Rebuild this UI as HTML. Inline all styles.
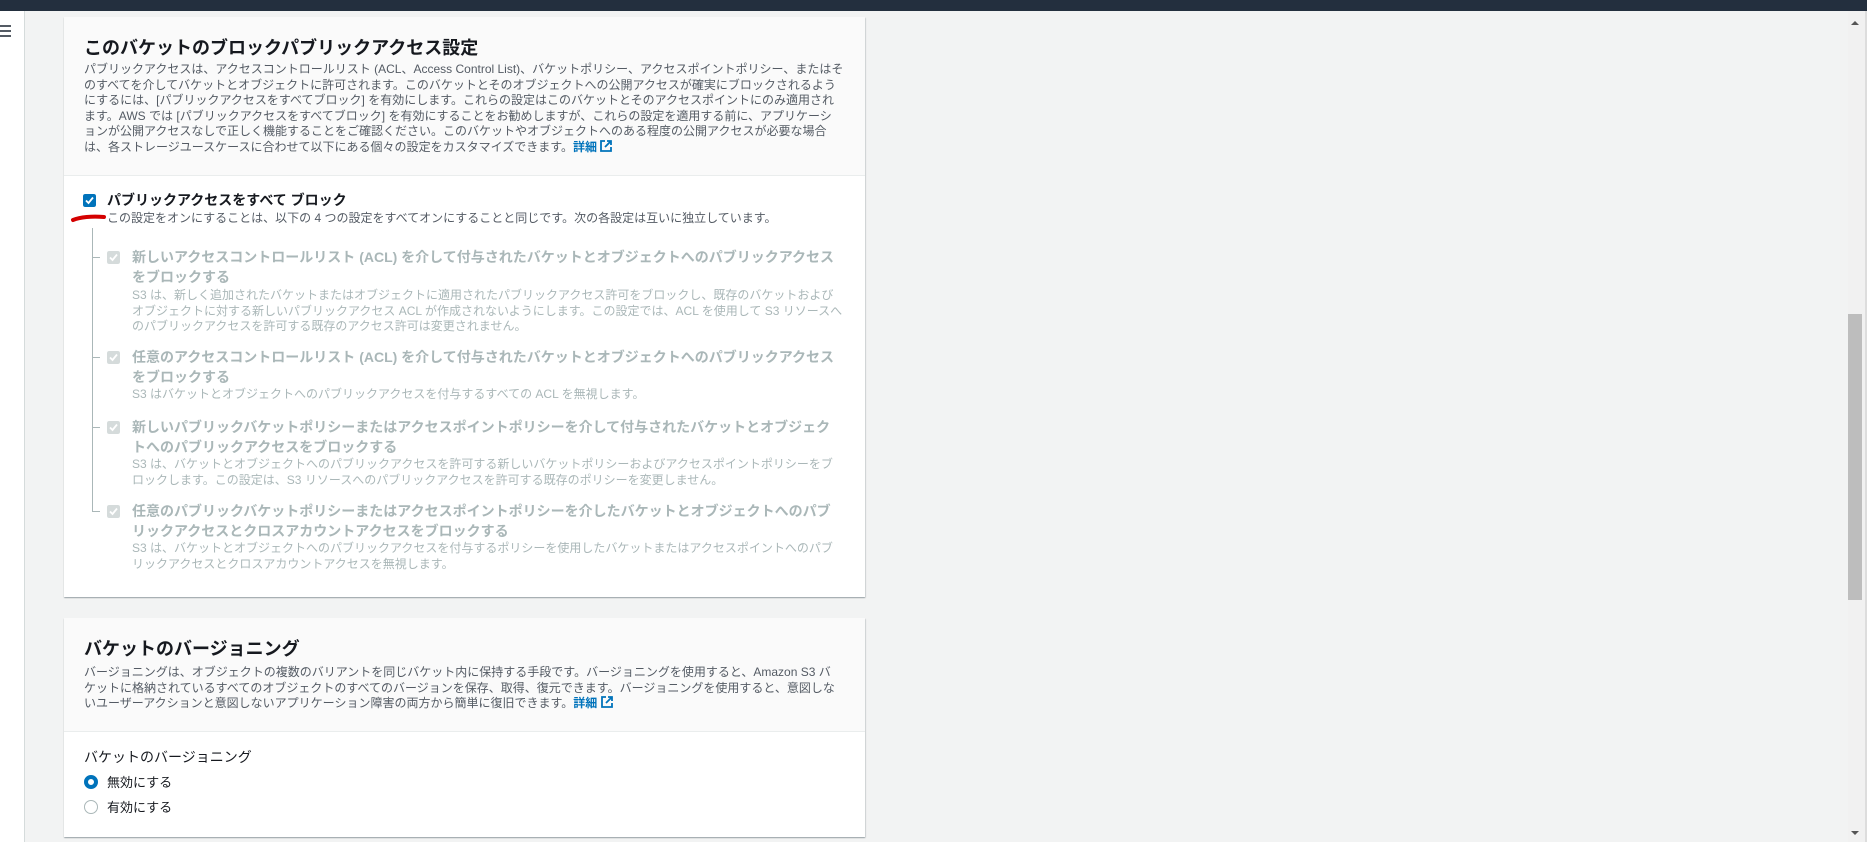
<!DOCTYPE html>
<html><head><meta charset="utf-8"><style>
*{margin:0;padding:0;box-sizing:border-box}
body{width:1867px;height:842px;overflow:hidden;background:#f2f3f3;font-family:"Liberation Sans","Noto Sans CJK JP",sans-serif;position:relative;color:#16191f}
.top{position:absolute;left:0;top:0;width:1867px;height:11px;background:#232f3e}
.side{position:absolute;left:0;top:11px;width:25px;height:831px;background:#fff;border-right:1px solid #d5dbdb}
.ham{position:absolute;left:0;top:25px;width:11px}
.ham i{display:block;height:2px;background:#545b64;margin-bottom:3px}
.card{position:absolute;left:64px;width:801px;background:#fff;box-shadow:0 1px 1px rgba(0,28,36,.3),1px 1px 1px rgba(0,28,36,.1);}
.hd{background:#fafafa;border-bottom:1px solid #eaeded;position:relative}
.t{position:absolute;font-size:18px;font-weight:bold;white-space:nowrap;color:#16191f}
.p{position:absolute;font-size:12px;line-height:15.5px;color:#545b64;white-space:nowrap}
.a{color:#0073bb;font-weight:bold}
.st{position:absolute;font-size:14px;font-weight:bold;line-height:20px;white-space:nowrap}
.dis{color:#aab7b8}
.cb{position:absolute;width:13px;height:13px;border-radius:2px}
.sb{position:absolute;left:1848px;top:11px;width:19px;height:831px;background:#f1f1f1;border-right:2px solid #ddd}
</style></head><body>
<div class="top"></div>
<div class="side"><div class="ham" style="top:14px"><i></i><i></i><i></i></div></div>

<div class="card" style="top:17px;height:580px">
 <div class="hd" style="height:159px">
  <div class="t" style="left:20px;top:17px">このバケットのブロックパブリックアクセス設定</div>
  <div class="p" style="left:20px;top:45px">パブリックアクセスは、アクセスコントロールリスト (ACL、Access Control List)、バケットポリシー、アクセスポイントポリシー、またはそ<br>のすべてを介してバケットとオブジェクトに許可されます。このバケットとそのオブジェクトへの公開アクセスが確実にブロックされるよう<br>にするには、[パブリックアクセスをすべてブロック] を有効にします。これらの設定はこのバケットとそのアクセスポイントにのみ適用され<br>ます。AWS では [パブリックアクセスをすべてブロック] を有効にすることをお勧めしますが、これらの設定を適用する前に、アプリケーシ<br>ョンが公開アクセスなしで正しく機能することをご確認ください。このバケットやオブジェクトへのある程度の公開アクセスが必要な場合<br>は、各ストレージユースケースに合わせて以下にある個々の設定をカスタマイズできます。<span class="a">詳細 <svg width="12" height="12" viewBox="0 0 12 12" style="vertical-align:-1px"><path d="M5 1H1v10h10V7M7 1h4v4M11 1L5 7" fill="none" stroke="#0073bb" stroke-width="1.8"/></svg></span></div>
 </div>
 <svg class="cb" style="left:19px;top:177px" viewBox="0 0 13 13"><rect width="13" height="13" rx="2" fill="#0073bb"/><path d="M3 6.5l2.5 2.5L10 3.5" stroke="#fff" stroke-width="1.8" fill="none"/></svg>
 <div class="st" style="left:43px;top:173px;font-weight:bold">パブリックアクセスをすべて ブロック</div>
 <div class="p" style="left:43px;top:194px">この設定をオンにすることは、以下の 4 つの設定をすべてオンにすることと同じです。次の各設定は互いに独立しています。</div>
 <div style="position:absolute;left:28px;top:211px;width:1px;height:283px;background:#aab7b8"></div>
 <div style="position:absolute;left:28px;top:240px;width:8px;height:1px;background:#aab7b8"></div>
 <div style="position:absolute;left:28px;top:340px;width:8px;height:1px;background:#aab7b8"></div>
 <div style="position:absolute;left:28px;top:410px;width:8px;height:1px;background:#aab7b8"></div>
 <div style="position:absolute;left:28px;top:494px;width:8px;height:1px;background:#aab7b8"></div>

 <svg class="cb" style="left:43px;top:234px" viewBox="0 0 13 13"><rect width="13" height="13" rx="2" fill="#d5dbdb"/><path d="M3 6.5l2.5 2.5L10 3.5" stroke="#fff" stroke-width="1.8" fill="none"/></svg>
 <div class="st dis" style="left:68px;top:230px">新しいアクセスコントロールリスト (ACL) を介して付与されたバケットとオブジェクトへのパブリックアクセス<br>をブロックする</div>
 <div class="p dis" style="left:68px;top:271px">S3 は、新しく追加されたバケットまたはオブジェクトに適用されたパブリックアクセス許可をブロックし、既存のバケットおよび<br>オブジェクトに対する新しいパブリックアクセス ACL が作成されないようにします。この設定では、ACL を使用して S3 リソースへ<br>のパブリックアクセスを許可する既存のアクセス許可は変更されません。</div>

 <svg class="cb" style="left:43px;top:334px" viewBox="0 0 13 13"><rect width="13" height="13" rx="2" fill="#d5dbdb"/><path d="M3 6.5l2.5 2.5L10 3.5" stroke="#fff" stroke-width="1.8" fill="none"/></svg>
 <div class="st dis" style="left:68px;top:330px">任意のアクセスコントロールリスト (ACL) を介して付与されたバケットとオブジェクトへのパブリックアクセス<br>をブロックする</div>
 <div class="p dis" style="left:68px;top:370px">S3 はバケットとオブジェクトへのパブリックアクセスを付与するすべての ACL を無視します。</div>

 <svg class="cb" style="left:43px;top:404px" viewBox="0 0 13 13"><rect width="13" height="13" rx="2" fill="#d5dbdb"/><path d="M3 6.5l2.5 2.5L10 3.5" stroke="#fff" stroke-width="1.8" fill="none"/></svg>
 <div class="st dis" style="left:68px;top:400px">新しいパブリックバケットポリシーまたはアクセスポイントポリシーを介して付与されたバケットとオブジェク<br>トへのパブリックアクセスをブロックする</div>
 <div class="p dis" style="left:68px;top:440px">S3 は、バケットとオブジェクトへのパブリックアクセスを許可する新しいバケットポリシーおよびアクセスポイントポリシーをブ<br>ロックします。この設定は、S3 リソースへのパブリックアクセスを許可する既存のポリシーを変更しません。</div>

 <svg class="cb" style="left:43px;top:488px" viewBox="0 0 13 13"><rect width="13" height="13" rx="2" fill="#d5dbdb"/><path d="M3 6.5l2.5 2.5L10 3.5" stroke="#fff" stroke-width="1.8" fill="none"/></svg>
 <div class="st dis" style="left:68px;top:484px">任意のパブリックバケットポリシーまたはアクセスポイントポリシーを介したバケットとオブジェクトへのパブ<br>リックアクセスとクロスアカウントアクセスをブロックする</div>
 <div class="p dis" style="left:68px;top:524px">S3 は、バケットとオブジェクトへのパブリックアクセスを付与するポリシーを使用したバケットまたはアクセスポイントへのパブ<br>リックアクセスとクロスアカウントアクセスを無視します。</div>
</div>

<svg style="position:absolute;left:70px;top:212px" width="40" height="12" viewBox="0 0 40 12"><path d="M3 8C10 5 22 4 34 5" stroke="#d40000" stroke-width="4" stroke-linecap="round" fill="none"/></svg>

<div class="card" style="top:618px;height:219px">
 <div class="hd" style="height:114px">
  <div class="t" style="left:20px;top:17px">バケットのバージョニング</div>
  <div class="p" style="left:20px;top:47px">バージョニングは、オブジェクトの複数のバリアントを同じバケット内に保持する手段です。バージョニングを使用すると、Amazon S3 バ<br>ケットに格納されているすべてのオブジェクトのすべてのバージョンを保存、取得、復元できます。バージョニングを使用すると、意図しな<br>いユーザーアクションと意図しないアプリケーション障害の両方から簡単に復旧できます。<span class="a">詳細 <svg width="12" height="12" viewBox="0 0 12 12" style="vertical-align:-1px"><path d="M5 1H1v10h10V7M7 1h4v4M11 1L5 7" fill="none" stroke="#0073bb" stroke-width="1.8"/></svg></span></div>
 </div>
 <div style="position:absolute;left:20px;top:129px;font-size:14px;color:#16191f;white-space:nowrap">バケットのバージョニング</div>
 <div style="position:absolute;left:20px;top:157px;width:14px;height:14px;border-radius:50%;border:4px solid #0073bb;background:#fff"></div>
 <div style="position:absolute;left:43px;top:154px;font-size:13px;color:#16191f">無効にする</div>
 <div style="position:absolute;left:20px;top:182px;width:14px;height:14px;border-radius:50%;border:1px solid #aab7b8;background:#fff"></div>
 <div style="position:absolute;left:43px;top:179px;font-size:13px;color:#16191f">有効にする</div>
</div>

<div class="sb"><div style="position:absolute;left:0;top:303px;width:14px;height:286px;background:#bdbdbd"></div>
<div style="position:absolute;left:3px;top:10px;border:4px solid transparent;border-bottom:4px solid #555;border-top:0"></div>
<div style="position:absolute;left:3px;top:820px;border:4px solid transparent;border-top:4px solid #555;border-bottom:0"></div></div>
</body></html>
